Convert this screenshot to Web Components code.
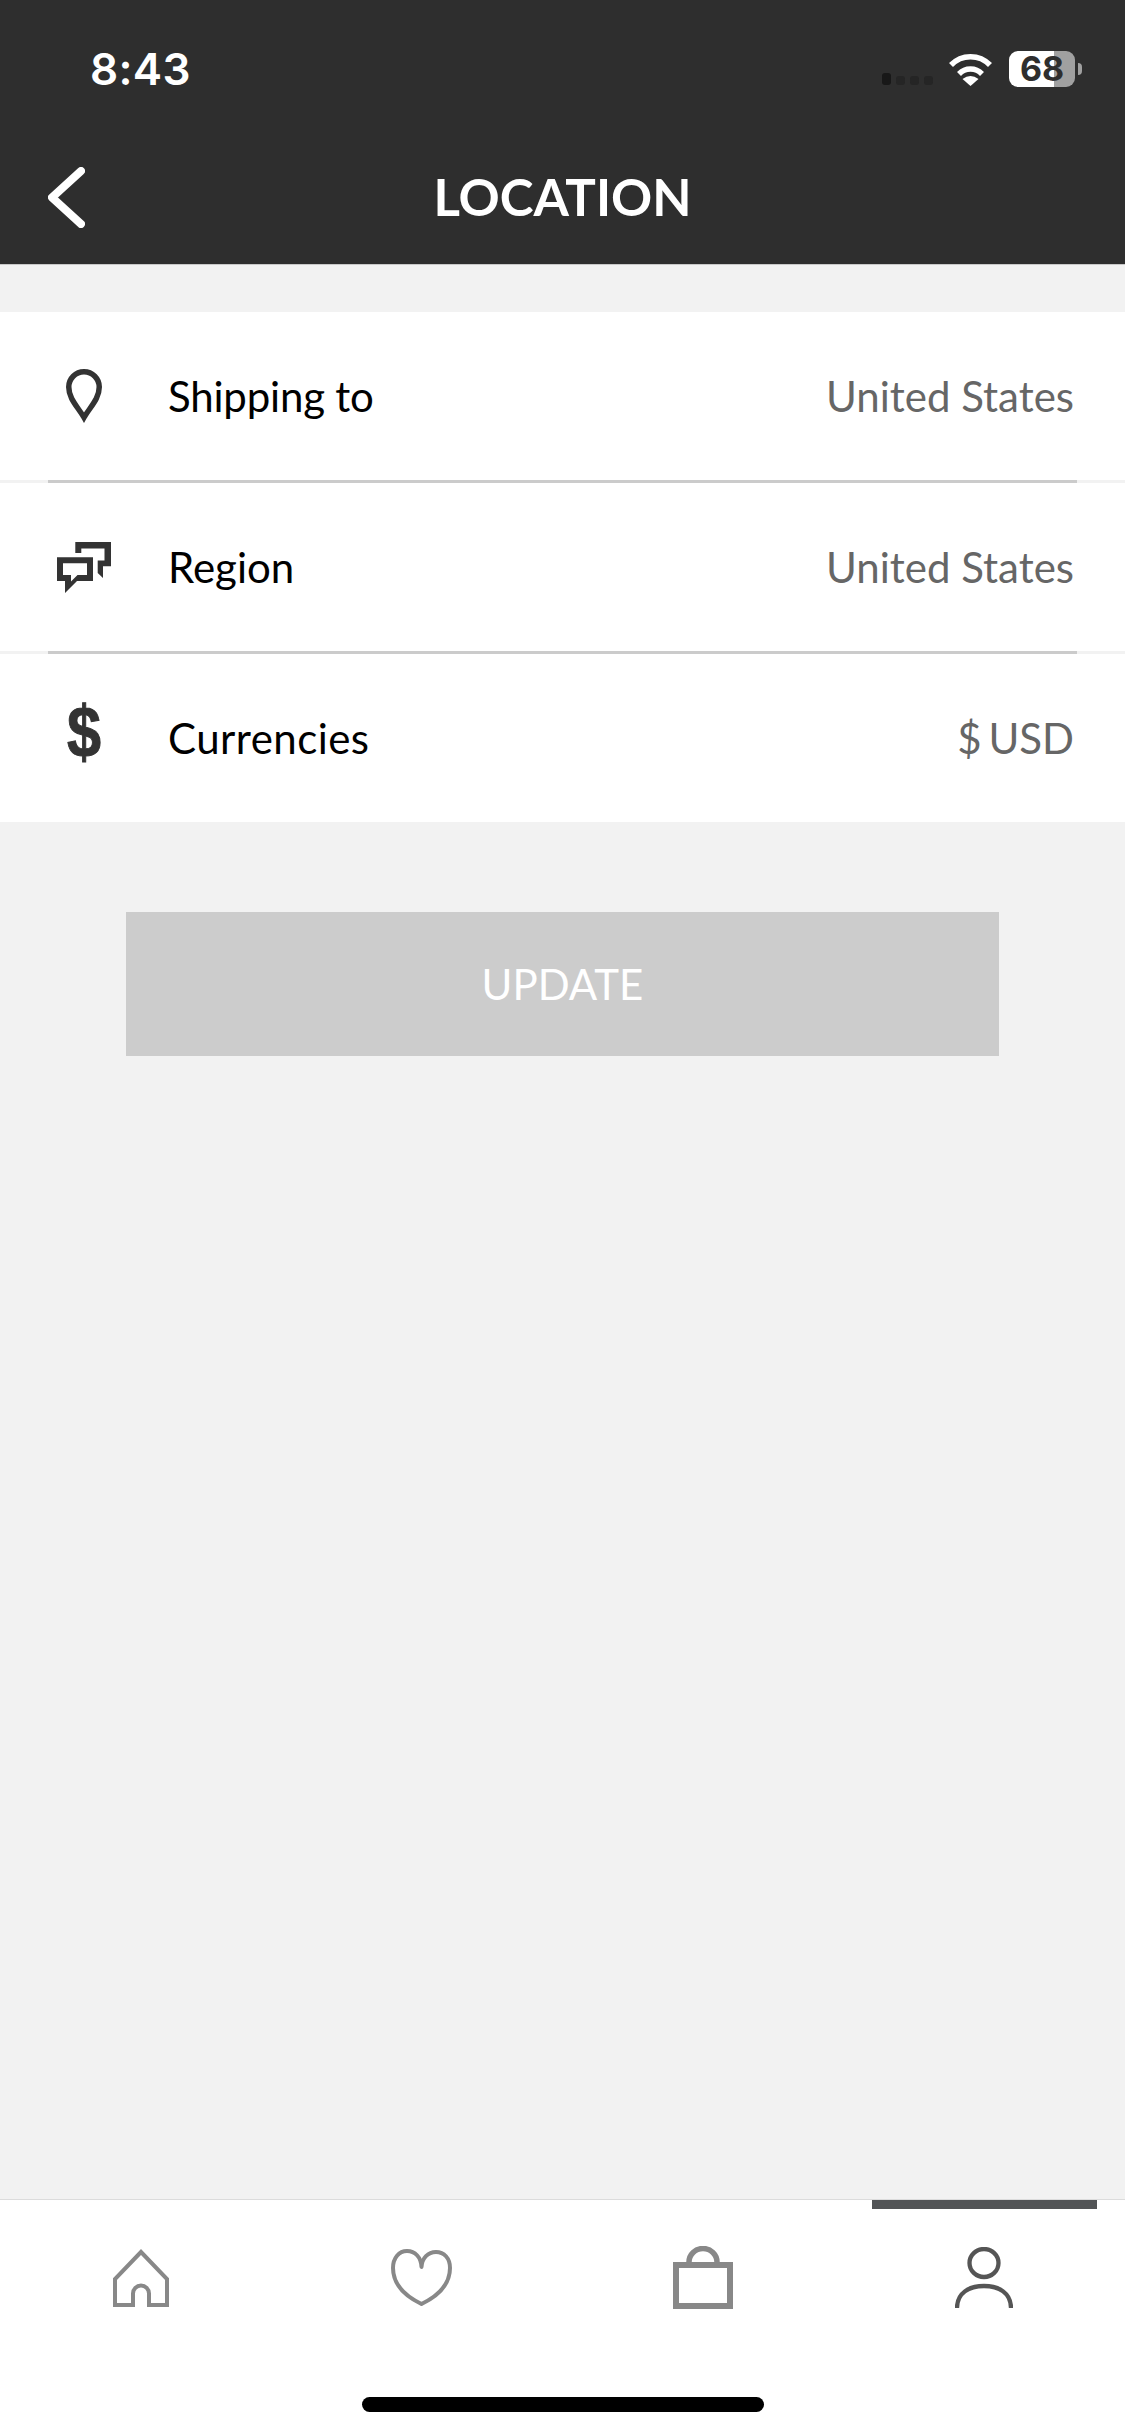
<!DOCTYPE html>
<html>
<head>
<meta charset="utf-8">
<title>Location</title>
<style>
html,body{margin:0;padding:0;background:#f2f2f2;}
body{width:1125px;height:2436px;display:flex;flex-direction:column;font-family:"Lato",sans-serif;overflow:hidden;}
</style>
</head>
<body>
<app-header title="LOCATION"></app-header>
<main-area>
  <location-list>
    <location-row label="Shipping to" value="United States" style="--label-track:-0.2px">
      <svg slot="icon" width="36" height="54" viewBox="0 0 36 54"><path d="M18 48.500C12 38 2.750 30 2.750 18A15.250 15.250 0 0 1 33.250 18C33.250 30 24 38 18 48.500Z" fill="none" stroke="#333" stroke-width="5.500"/></svg>
    </location-row>
    <location-row label="Region" value="United States">
      <svg slot="icon" width="54" height="51" viewBox="0 0 54 51"><path fill="#333" d="M18.300 0H54V24.300H46V36L40.700 31V18.500H47.500V6.500H24.300V11H18.300Z"/><path fill="#333" fill-rule="evenodd" d="M0 15.300H36V39H20L8 51V39H0ZM6 21.300V33H14V39.500L20.500 33H30V21.300Z"/></svg>
    </location-row>
    <location-row label="Currencies" value="$ USD" last style="--label-track:0.45px;--value-space:-4px">
      <span slot="icon" style="display:block;font:700 72px/1 'Liberation Sans',sans-serif;color:#333;-webkit-text-stroke:1px #333;transform:translateY(-6px) scaleX(.85)">$</span>
    </location-row>
  </location-list>
  <action-button>UPDATE</action-button>
</main-area>
<tab-bar>
  <tab-item>
    <svg style="margin-bottom:2px" width="56" height="58" viewBox="0 0 56 58"><path d="M2 56V30L28 3L54 30V56H36V44.500a8 8 0 0 0 -16 0V56Z" fill="none" stroke="#888" stroke-width="4"/></svg>
  </tab-item>
  <tab-item>
    <svg style="margin-bottom:3px" width="61" height="57" viewBox="0 0 61 57"><path d="M30.500 18C30 8 24 2 16 2C8 2 2 9 2 19C2 35 14 47 30.500 55C47 47 59 35 59 19C59 9 53 3 45 3C37 3 31 9 30.500 18Z" fill="none" stroke="#888" stroke-width="4" stroke-linecap="round" stroke-linejoin="round"/></svg>
  </tab-item>
  <tab-item>
    <svg width="60" height="63" viewBox="0 0 60 63"><path d="M16 17V16a14 13.500 0 0 1 28 0V17" fill="none" stroke="#888" stroke-width="5.500"/><rect x="3" y="19" width="54" height="41" fill="none" stroke="#888" stroke-width="6"/></svg>
  </tab-item>
  <tab-item active>
    <svg style="margin-bottom:1px" width="58" height="61" viewBox="0 0 58 61"><ellipse cx="29" cy="16" rx="14.500" ry="14" fill="none" stroke="#555" stroke-width="4.300"/><path d="M2 61C2 46 14 39 29 39C44 39 56 46 56 61" fill="none" stroke="#555" stroke-width="4.300"/></svg>
  </tab-item>
</tab-bar>

<script>
class AppHeader extends HTMLElement{
    constructor(){
        super();
        this.attachShadow({mode:"open"});
    }

    connectedCallback(){
        this.shadowRoot.innerHTML=`
        <style>
            :host{display:block;background:#2e2e2e;color:#fff;height:264px;border-bottom:1px solid #c8c8c8;flex:none;}
            .status{height:132px;box-sizing:border-box;padding:6px 43px 0 90px;display:flex;align-items:center;justify-content:space-between;}
            .time{font:600 44px/1 "Inter",sans-serif;letter-spacing:.3px;}
            .right{display:flex;align-items:center;}
            .dots{display:flex;gap:5px;align-items:flex-end;margin-top:20px;margin-right:15px;}
            .dots i{display:block;width:9px;height:9px;border-radius:3px;background:#252525;}
            .dots i:first-child{height:12px;background:#181818;}
            .wifi{display:block;margin-right:16px;}
            .battery{width:66px;height:36px;border-radius:9px;background:linear-gradient(90deg,#fff 68%,#a0a0a0 68%);color:#2e2e2e;font:700 34px/36px "Inter",sans-serif;text-align:center;}
            .nub{width:4px;height:12px;margin-left:3px;border-radius:0 4px 4px 0;background:#a0a0a0;}
            .nav{height:132px;box-sizing:border-box;padding-bottom:3px;display:flex;align-items:center;justify-content:center;position:relative;}
            .back{position:absolute;left:48px;top:35px;display:block;}
            .title{font:700 51px/1 "Lato",sans-serif;}
        </style>
        <div class="status">
            <span class="time">8:43</span>
            <div class="right">
                <div class="dots"><i></i><i></i><i></i><i></i></div>
                <svg class="wifi" width="45" height="33" viewBox="0 0 45 33"><path d="M3 12A27 27 0 0 1 42 12M11 21A16 16 0 0 1 34 21" fill="none" stroke="#fff" stroke-width="5.500"/><path d="M22.500 33L14.500 26Q22.500 20 30.500 26Z" fill="#fff"/></svg>
                <div class="battery">68</div>
                <div class="nub"></div>
            </div>
        </div>
        <div class="nav">
            <svg class="back" width="37" height="61" viewBox="0 0 37 61"><path d="M33 4L4 30.500L33 57" fill="none" stroke="#fff" stroke-width="8" stroke-linecap="round" stroke-linejoin="round"/></svg>
            <span class="title">${this.getAttribute("title")}</span>
        </div>
        `;
    }
}
customElements.define("app-header",AppHeader);

class MainArea extends HTMLElement{
    constructor(){
        super();
        this.attachShadow({mode:"open"}).innerHTML=`
        <style>
            :host{display:flex;flex-direction:column;flex:1;padding-top:47px;min-height:0;background:#f2f2f2;}
        </style>
        <slot></slot>
        `;
    }
}
customElements.define("main-area",MainArea);

class LocationList extends HTMLElement{
    constructor(){
        super();
        this.attachShadow({mode:"open"}).innerHTML=`
        <style>
            :host{display:block;background:#fff;}
        </style>
        <slot></slot>
        `;
    }
}
customElements.define("location-list",LocationList);

class LocationRow extends HTMLElement{
    constructor(){
        super();
        this.attachShadow({mode:"open"});
    }

    connectedCallback(){
        this.shadowRoot.innerHTML=`
        <style>
            :host{display:block;}
            .row{height:168px;display:flex;align-items:center;padding:0 51px 0 48px;}
            .icon{width:72px;display:flex;justify-content:center;align-items:center;margin-right:48px;flex:none;}
            .label{flex:1;font:400 42px/1 "Lato",sans-serif;color:#000;letter-spacing:var(--label-track,0);}
            .value{font:400 42px/1 "Lato",sans-serif;color:#666;word-spacing:var(--value-space,0);}
            .rule{height:3px;background:#f2f2f2;}
            .rule div{height:3px;margin:0 48px;background:#cbcbcb;}
            :host([last]) .rule{display:none;}
        </style>
        <div class="row">
            <div class="icon"><slot name="icon"></slot></div>
            <span class="label">${this.getAttribute("label")}</span>
            <span class="value">${this.getAttribute("value")}</span>
        </div>
        <div class="rule"><div></div></div>
        `;
    }
}
customElements.define("location-row",LocationRow);

class ActionButton extends HTMLElement{
    constructor(){
        super();
        this.attachShadow({mode:"open"}).innerHTML=`
        <style>
            :host{display:flex;align-items:center;justify-content:center;height:144px;margin:90px 126px 0;background:#ccc;color:#fff;font:400 42px/1 "Lato",sans-serif;}
        </style>
        <slot></slot>
        `;
    }
}
customElements.define("action-button",ActionButton);

class TabBar extends HTMLElement{
    constructor(){
        super();
        this.attachShadow({mode:"open"}).innerHTML=`
        <style>
            :host{display:block;flex:none;height:237px;box-sizing:border-box;background:#fff;border-top:1px solid #dcdcdc;}
            .tabs{display:grid;grid-template-columns:repeat(4,1fr);height:197px;}
            .home{width:402px;height:15px;margin:0 auto;border-radius:8px;background:#000;}
        </style>
        <div class="tabs"><slot></slot></div>
        <div class="home"></div>
        `;
    }
}
customElements.define("tab-bar",TabBar);

class TabItem extends HTMLElement{
    constructor(){
        super();
        this.attachShadow({mode:"open"}).innerHTML=`
        <style>
            :host{display:flex;flex-direction:column;align-items:center;}
            .mark{width:225px;height:9px;flex:none;}
            :host([active]) .mark{background:#525456;}
            .icon{height:100px;display:flex;align-items:flex-end;}
        </style>
        <div class="mark"></div>
        <div class="icon"><slot></slot></div>
        `;
    }
}
customElements.define("tab-item",TabItem);
</script>
</body>
</html>
